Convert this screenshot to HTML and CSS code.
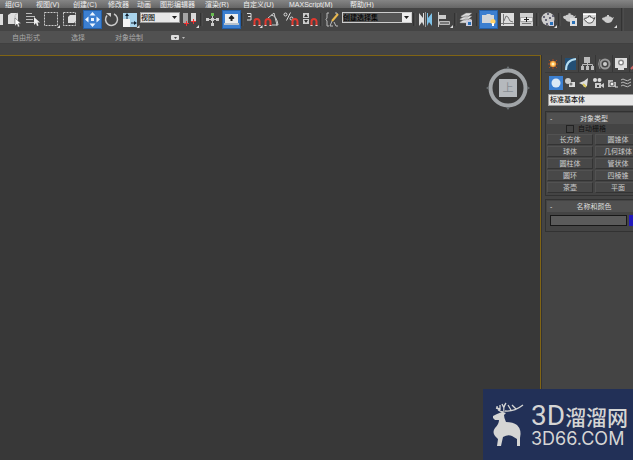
FILE: index.html
```html
<!DOCTYPE html>
<html lang="zh-CN">
<head>
<meta charset="utf-8">
<title>MAXScript</title>
<link rel="stylesheet" href="styles.css">
</head>
<body>
<svg class="defs" aria-hidden="true">
  <defs>
    <symbol id="magnet" viewBox="0 0 8 8"><path d="M1.500 8V3.500a2.500 2.500 0 0 1 5 0V8" fill="none" stroke="#e0392f" stroke-width="2"/><path d="M.5 7.500h2M5.500 7.500h2" stroke="#ddd"/></symbol>
    <symbol id="teapot" viewBox="0 0 14 10"><path d="M3 4c0-1 2-1.500 3-1.700V1h2v1.300c1 .2 3 .7 3 1.700l2-1-1.500 3C11 8 9 9 7 9S3.500 8 3 6.500C1 6.500 0 3 3 3.500z"/></symbol>
  </defs>
</svg>
<nav class="menu">
  <a href="#">组(G)</a><a href="#">视图(V)</a><a href="#">创建(C)</a><a href="#">修改器</a><a href="#">动画</a><a href="#">图形编辑器</a><a href="#">渲染(R)</a><a href="#">自定义(U)</a><a href="#">MAXScript(M)</a><a href="#">帮助(H)</a>
</nav>
<div class="toolbar">
  <span class="combo-end"></span>
  <button aria-label="选择对象"><svg viewBox="0 0 19 19"><path d="M4 5l3-2h7v9l-2 2H4z" fill="#ddd"/><path d="M11 5.500v8M11 5l3-2" fill="none" stroke="#bbb"/><path d="M11 8v8l2-2 1 3 1.500-.5-1-3H17z" fill="#fff" stroke="#555" stroke-width=".5"/></svg></button>
  <button aria-label="按名称选择"><svg viewBox="0 0 19 19"><path d="M3 3.500h6M3 6.500h9M3 9.500h7M3 12.500h8" stroke="#bbb"/><path d="M11 7v8l2-2 1 3 1.500-.5-1-3H17z" fill="#eee"/></svg></button>
  <button aria-label="矩形选择区域"><svg viewBox="0 0 19 19"><path d="M2.500 2.500h13v13h-13z" fill="none" stroke="#ccc" stroke-dasharray="2 1"/><path d="M18 15v3h-3z" fill="#ddd"/></svg></button>
  <button aria-label="窗口/交叉"><svg viewBox="0 0 19 19"><path d="M2.500 2.500h12v13h-12z" fill="none" stroke="#ccc" stroke-dasharray="2 1"/><path d="M7 7l2-2h6v6l-2 2H7z" fill="#ddd"/></svg></button>
  <i class="sep"></i>
  <button class="on" aria-label="移动"><svg viewBox="0 0 19 19"><path d="M9.500 2l3 3.500h-6zM9.500 17l3-3.500h-6zM2 9.500l3.500-3v6zM17 9.500l-3.500-3v6zM8 8h3v3H8z" fill="#eef6ff"/></svg></button>
  <button aria-label="旋转"><svg viewBox="0 0 19 19"><path d="M5 5.500a6 6 0 1 0 7-1.500" fill="none" stroke="#ccc" stroke-width="1.500"/><path d="M4 3h5v4z" fill="#ccc"/></svg></button>
  <button aria-label="缩放"><svg viewBox="0 0 19 19"><path d="M2 3h14v14H2z" fill="#a9d4ec"/><path d="M2 9h7v8H2z" fill="#f4f4f4"/><path d="M6 9V6M10 13h4" stroke="#123"/><path d="M6 3l2 3H4zM16 13l-3-2v4z" fill="#123"/><path d="M18.500 15v3h-3z" fill="#ddd"/></svg></button>
  <select class="view-select" aria-label="参考坐标系"><option>视图</option></select>
  <button aria-label="使用轴点中心"><svg viewBox="0 0 19 19"><path d="M2 3h5v10H2z" fill="#a4a4a4"/><path d="M10 3h5v9h-5z" fill="#d8d8d8"/><path d="M3 13.500h5M5.500 11v5M10 11.500h5M12.500 9v5" stroke="#e33"/><path d="M18 15v3h-3z" fill="#ddd"/></svg></button>
  <i class="sep"></i>
  <button aria-label="选择并操纵"><svg viewBox="0 0 19 19"><path d="M9.500 5v9M5 9.500h9" stroke="#ccc"/><path d="M8 3h3v3H8z" fill="#69bd52"/><path d="M8 13h3v3H8zM3 8h3v3H3zM13 8h3v3h-3zM8 8h3v3H8z" fill="#ccc"/></svg></button>
  <button class="on" aria-label="键盘快捷键覆盖切换"><svg viewBox="0 0 19 19"><path d="M3 4h13v9H3z" fill="#eee"/><path d="M2 13h15v2H2z" fill="#b8c2cc"/><path d="M9.500 5l3 3-1 1h-1v2h-2V9h-1l-1-1z" fill="#222"/></svg></button>
  <i class="sep"></i>
  <button aria-label="捕捉开关"><svg viewBox="0 0 19 19"><path d="M3 3.500h4v6.500H3M4 6.500h3" fill="none" stroke="#ddd"/><use href="#magnet" x="9" y="8" width="8" height="8"/><path d="M18.500 15v3h-3z" fill="#ddd"/></svg></button>
  <button aria-label="角度捕捉切换"><svg viewBox="0 0 19 19"><path d="M5 8l6-5 3 12h-5M8 5q6 1 7 10h-2" fill="none" stroke="#ccc"/><use href="#magnet" x="1" y="8" width="8" height="8"/></svg></button>
  <button aria-label="百分比捕捉切换"><svg viewBox="0 0 19 19"><path d="M8.500 2.500l-4 8" stroke="#ddd"/><circle cx="3.500" cy="4.500" r="1.500" fill="none" stroke="#ddd"/><circle cx="9.500" cy="8.500" r="1.500" fill="none" stroke="#ddd"/><use href="#magnet" x="9" y="8" width="8" height="8"/></svg></button>
  <button aria-label="微调器捕捉切换"><svg viewBox="0 0 19 19"><path d="M2 3h6v5H2zM2 9h6v5H2z" fill="#ccc"/><path d="M5 4l2 3H3zM5 13l2-3H3z" fill="#333"/><use href="#magnet" x="9" y="8" width="8" height="8"/></svg></button>
  <i class="sep"></i>
  <button aria-label="编辑命名选择集"><svg viewBox="0 0 19 19"><path d="M6 3H4v5L3 9.500 4 11v5h2M12 3h2v2M9 11l-2 5h3M11 12l2 4h2" fill="none" stroke="#bbb"/><path d="M15 4l-6 7" stroke="#e9b84d" stroke-width="2"/></svg></button>
  <select class="set-select" aria-label="命名选择集"><option>创建选择集</option></select>
  <i class="sep"></i>
  <button aria-label="镜像"><svg viewBox="0 0 19 19"><path d="M3 3l4 5V3h1v13l-2-4-3 4z" fill="#ddd"/><path d="M16 3l-4 5V3h-1v13l2-4 3 4z" fill="#7fc2e8"/><path d="M9.500 2v15" stroke="#999"/></svg></button>
  <button aria-label="对齐"><svg viewBox="0 0 19 19"><path d="M3.500 2v15" stroke="#ccc"/><path d="M4 5h7v4H4z" fill="#ccc"/><path d="M4.500 11.500h10v3h-10z" fill="#777" stroke="#bbb"/><path d="M18 15v3h-3z" fill="#ddd"/></svg></button>
  <i class="sep"></i>
  <button aria-label="层管理器"><svg viewBox="0 0 19 19"><path d="M3 12l5-3h7l-4 4H3zM3 9l5-3h7l-4 4H3zM4 6l5-3h6l-4 4H4z" fill="#ddd" stroke="#777" stroke-width=".5"/><path d="M9 10h6v6H9z" fill="#ccd"/><path d="M11 12h3v3h-3z" fill="#2871b8"/></svg></button>
  <i class="sep"></i>
  <button class="on" aria-label="石墨建模工具"><svg viewBox="0 0 19 19"><path d="M3 5h4l1-1h3l1 1h3v8H3z" fill="#d3d6d9"/><circle cx="14" cy="11.500" r="2.500" fill="#ffd36a"/><path d="M14 13v3" stroke="#fff" stroke-width="2"/></svg></button>
  <button aria-label="曲线编辑器"><svg viewBox="0 0 19 19"><path d="M3 3h13v13H3z" fill="#ddd"/><path d="M5.500 4v11M3 13.500h13M6 11l2-5 2 1 2 4 3 1" fill="none" stroke="#777"/></svg></button>
  <button aria-label="图解视图"><svg viewBox="0 0 19 19"><path d="M3 3h13v4H3zM3 12h13v4H3z" fill="#d0d0d0"/><path d="M3 7h13v5H3z" fill="#aaa"/><path d="M4 8h11v3H4z" fill="#eee"/><path d="M9.500 7v5M7 9.500h5" stroke="#222"/><path d="M5 13.500h9" stroke="#777"/></svg></button>
  <i class="sep"></i>
  <button aria-label="材质编辑器"><svg viewBox="0 0 19 19"><circle cx="9" cy="9" r="6.500" fill="#ccc"/><path d="M4 6h2v2H4zM8 3h2v2H8zM6 9h2v2H6zM10 7h2v2h-2zM13 5h2v2h-2zM7 13h2v2H7z" fill="#667"/><path d="M10 11h5v5h-5z" fill="#ccd"/><path d="M11 12h3v3h-3z" fill="#2871b8"/><path d="M18 15v3h-3z" fill="#ddd"/></svg></button>
  <i class="sep"></i>
  <button aria-label="渲染设置"><svg viewBox="0 0 19 19"><use href="#teapot" x="1" y="2" width="15" height="11" fill="#ccc"/><path d="M9 8h7v8H9z" fill="#ddd"/><path d="M11 11h3v3h-3z" fill="#2871b8"/></svg></button>
  <button aria-label="渲染帧窗口"><svg viewBox="0 0 19 19"><path d="M3 3h13v13H3z" fill="#d8d8d8"/><path d="M3 4.500h13" stroke="#fff"/><use href="#teapot" x="3" y="5" width="13" height="9" fill="#eee" stroke="#444"/></svg></button>
  <button aria-label="渲染产品"><svg viewBox="0 0 19 19"><use href="#teapot" x="2" y="4" width="14" height="10" fill="#ccc"/><path d="M18 15v3h-3z" fill="#ddd"/></svg></button>
  <i class="sep last"></i>
</div>
<nav class="ribbon">
  <a href="#">自由形式</a><a href="#">选择</a><a href="#">对象绘制</a>
  <button aria-label="最小化"><svg viewBox="0 0 16 8"><rect x="1" y="1" width="8" height="5" rx="1" fill="#ddd"/><path d="M4 3h3L5.500 5z" fill="#444"/><path d="M12 3h3l-1.500 2z" fill="#bbb"/></svg></button>
</nav>
<div class="strip"></div>
<div class="work">
  <main class="viewport">
    <svg class="cube" viewBox="0 0 44 44" role="img" aria-label="上"><circle cx="22" cy="22" r="17.500" fill="none" stroke="#a1a5a8" stroke-width="4"/><path d="M20 3l2-3 2 3zM20 41l2 3 2-3zM3 20l-3 2 3 2zM41 20l3 2-3 2z" fill="#6b7073"/><path d="M13 13h18v18H13z" fill="#b5b9bd"/><text x="22" y="26" text-anchor="middle">上</text></svg>
  </main>
  <aside class="panel">
    <div class="tabs">
      <button class="active" aria-label="创建"><svg viewBox="0 0 16 16"><path d="M8 3v10M3 8h10M4 4l8 8M12 4l-8 8" stroke="#a94d22"/><circle cx="8" cy="8" r="3" fill="#ffad42"/><circle cx="8" cy="8" r="1.500" fill="#fff2bb"/></svg></button>
      <button aria-label="修改"><svg viewBox="0 0 16 16"><path d="M3 2h11v12H3z" fill="#234f75"/><path d="M4 14Q4 4 14 3" fill="none" stroke="#b6def2" stroke-width="2"/></svg></button>
      <button aria-label="层次"><svg viewBox="0 0 16 16"><path d="M5 1h6v6H5zM2 10h3v4H2zM7 10h3v4H7zM12 10h3v4h-3z" fill="#bbb"/><path d="M3.500 10V8.500h10V10M8.500 6v4" fill="none" stroke="#bbb"/></svg></button>
      <button aria-label="运动"><svg viewBox="0 0 16 16"><circle cx="9" cy="8" r="4.500" fill="none" stroke="#999" stroke-width="2"/><circle cx="9" cy="8" r="2" fill="#ccc"/><path d="M4 3Q1 8 4 13" fill="none" stroke="#888"/></svg></button>
      <button aria-label="显示"><svg viewBox="0 0 16 16"><path d="M2 2h12v10H2zM5 12h6v2H5z" fill="#ddd"/><circle cx="8" cy="6.500" r="3" fill="#888"/><circle cx="8" cy="6.500" r="1.500" fill="#fff"/></svg></button>
      <button aria-label="工具"><svg viewBox="0 0 16 16"><path d="M1 13L9 5" stroke="#c66" stroke-width="2"/></svg></button>
    </div>
    <div class="kinds">
      <button class="on" aria-label="几何体"><svg viewBox="0 0 14 14"><circle cx="7" cy="7" r="4.500" fill="#dce9f5"/></svg></button>
      <button aria-label="图形"><svg viewBox="0 0 14 14"><circle cx="5" cy="5" r="3" fill="#ccc"/><path d="M6 6h6v5H6z" fill="#ddd"/><circle cx="8" cy="8" r="1.500" fill="#777"/></svg></button>
      <button aria-label="灯光"><svg viewBox="0 0 14 14"><path d="M2 7l5-2 4-3-1 8-3 1-1-2z" fill="#ddd"/><path d="M6 8l3 3" stroke="#d8c85a" stroke-width="2"/></svg></button>
      <button aria-label="摄影机"><svg viewBox="0 0 14 14"><circle cx="4" cy="4" r="2" fill="#ddd"/><circle cx="8.500" cy="4" r="2" fill="#ddd"/><path d="M4 7h6v5H4zM10 9l3-2v5l-3-2z" fill="#ccc"/><path d="M6 9h2v2H6z" fill="#444"/></svg></button>
      <button aria-label="辅助对象"><svg viewBox="0 0 14 14"><path d="M3 4h5v2h3v5H3z" fill="#bbb"/><circle cx="7" cy="8" r="2" fill="#eee" stroke="#555"/><path d="M10 11h3" stroke="#ddd"/></svg></button>
      <button aria-label="空间扭曲"><svg viewBox="0 0 14 14"><path d="M2 4q2-2 4 0t6-1M2 7q2-2 4 0t6-1M2 10q2-2 4 0t6-1" fill="none" stroke="#bbb"/></svg></button>
    </div>
    <select class="type-select" aria-label="类别"><option>标准基本体</option></select>
    <section class="rollout">
      <h2><button aria-label="折叠">-</button>对象类型</h2>
      <label class="auto"><input type="checkbox">自动栅格</label>
      <div class="objects">
        <button>长方体</button><button>圆锥体</button>
        <button>球体</button><button>几何球体</button>
        <button>圆柱体</button><button>管状体</button>
        <button>圆环</button><button>四棱锥</button>
        <button>茶壶</button><button>平面</button>
      </div>
    </section>
    <section class="rollout">
      <h2><button aria-label="折叠">-</button>名称和颜色</h2>
      <div class="name-row"><input type="text" aria-label="名称"><button aria-label="颜色"></button></div>
    </section>
  </aside>
</div>
<div class="brand">
  <svg viewBox="0 0 34 46" aria-hidden="true"><path d="M11 10L6 12 2 14 2 16 4 18 8 18Q8 22 4 26Q1 30 4 34L7 37 6 44H10L12 35Q17 32 21 34L26 37 26 44H29L29 36Q31 28 26 23Q22 20 15 20Q13 16 13 13L15 11 12 10z" fill="#d5d5d4"/><path d="M12 10Q6 9 6 4M9 7L5 6M9 8L9 3M13 10Q12 5 15 1M13 6L11 2M14 9Q23 10 32 3M20 8L17 3M25 7L21 3" fill="none" stroke="#d5d5d4" stroke-width="1.300"/></svg>
  <div class="brand-text"><strong><b>3D</b>溜溜网</strong><span>3D66.COM</span></div>
</div>
</body>
</html>
```

FILE: styles.css
```css
* { box-sizing: border-box; }
body {
  margin: 0;
  height: 100vh;
  display: flex;
  flex-direction: column;
  overflow: hidden;
  background: #383838;
  color: #ccc;
  font: 7px/10px "Liberation Sans", "Noto Sans CJK SC", sans-serif;
}
button, select, input { font: inherit; color: inherit; margin: 0; padding: 0; border: 0; border-radius: 0; background: none; }
a { color: inherit; text-decoration: none; }
svg { display: block; }
.defs { position: absolute; width: 0; height: 0; }
.menu {
  flex: none;
  height: 8px;
  padding-left: 5px;
  display: grid;
  grid-template-columns: 31px 37px 35px 29px 23px 45px 38px 46px 61px auto;
  align-items: end;
  overflow: hidden;
  white-space: nowrap;
  color: #eee;
  background: linear-gradient(#858585, #666);
}
.menu a { line-height: 10px; margin-bottom: 3px; }
.toolbar {
  flex: none;
  height: 23px;
  display: flex;
  align-items: center;
  background: #444;
  overflow: hidden;
}
.toolbar > * { flex: none; }
.toolbar button { width: 19px; height: 19px; }
.toolbar button.on { background: #3c7fd0; border: 1px solid #2560a8; }
.toolbar button.on svg { margin: -1px; }
.toolbar svg { width: 19px; height: 19px; }
.combo-end { width: 3px; height: 11px; margin-right: 1px; background: #ddd; }
.sep { width: 3px; height: 13px; border-left: 1px solid #333; border-right: 1px solid #4c4c4c; }
.sep.last { height: 23px; margin-left: 3px; }
select { appearance: none; }
.view-select, .set-select, .type-select { height: 11px; border: 1px solid #999; line-height: 9px; font-size: 7px; font-weight: 500; background: #e6e6e6; color: #111; }
.view-select, .set-select {
  align-self: flex-start;
  margin-top: 4px;
  background-image: url("data:image/svg+xml,%3Csvg xmlns='http://www.w3.org/2000/svg' width='9' height='9'%3E%3Cpath d='M0 0h9v9H0z' fill='%23eee'/%3E%3Cpath d='M2 3h5L4.500 6z' fill='%23222'/%3E%3C/svg%3E");
  background-position: right center;
  background-repeat: no-repeat;
}
.view-select { width: 40px; margin-right: 1px; }
.set-select { width: 70px; margin-right: 1px; background-color: #555; border-color: #ccc; color: #000; }
.ribbon {
  flex: none;
  height: 13px;
  padding-left: 12px;
  display: grid;
  grid-template-columns: 59px 44px 55px auto;
  align-items: end;
  background: #515151;
  border-bottom: 1px solid #404040;
  color: #aaa;
}
.ribbon button { width: 16px; height: 10px; }
.ribbon svg { height: 8px; }
.strip { flex: none; height: 11px; background: #434343; }
.work { flex: 1; min-height: 0; display: flex; }
.viewport {
  flex: 1;
  display: flex;
  justify-content: flex-end;
  align-items: flex-start;
  padding: 10px 10px 0 0;
  border-top: 1px solid #806414;
  border-right: 1px solid #806414;
  background: #383838;
}
.cube { width: 44px; height: 44px; }
.cube text { font-size: 11px; fill: #888e94; }
.panel {
  flex: none;
  width: 92px;
  padding-left: 3px;
  overflow: hidden;
  background: #444;
  border-left: 1px solid #333;
}
.tabs { display: flex; height: 18px; width: 110px; border-bottom: 1px solid #3a3a3a; }
.tabs button { width: 17px; height: 17px; border-right: 1px solid #363636; }
.tabs svg { width: 16px; height: 16px; }
.kinds { display: flex; width: 100px; padding: 3px 0 0 4px; }
.kinds button { width: 14px; height: 14px; }
.kinds button.on { background: #3c7fd0; }
.kinds svg { width: 14px; height: 14px; }
.type-select { display: block; width: 100px; height: 12px; margin: 4px 0 5px 3px; padding-left: 1px; line-height: 10px; }
.rollout { width: 98px; margin-bottom: 3px; padding: 1px 1px 2px; border: 1px solid #323232; }
.rollout h2 {
  display: flex;
  height: 11px;
  margin: 0;
  justify-content: center;
  align-items: center;
  position: relative;
  font-size: 7px;
  line-height: 11px;
  font-weight: normal;
  background: #505050;
  color: #ddd;
}
.rollout h2 button { position: absolute; left: 3px; top: 0; }
.auto { display: flex; align-items: center; height: 10px; padding-left: 19px; gap: 4px; color: #111; }
.auto input { appearance: none; width: 8px; height: 8px; border: 1px solid #222; }
.objects { display: grid; grid-template-columns: 1fr 1fr; gap: 1px 2px; }
.objects button { height: 11px; background: #484848; border: 1px solid #525252; border-right-color: #333; border-bottom-color: #333; line-height: 9px; }
.name-row { display: flex; gap: 2px; padding: 3px 0 3px 3px; }
.name-row input { width: 77px; height: 11px; background: #5b5b5b; border: 1px solid #181818; }
.name-row button { width: 11px; height: 11px; background: #2319bc; }
.brand {
  position: fixed;
  right: 0;
  bottom: 0;
  width: 150px;
  height: 71px;
  padding: 13px 8px 0 8px;
  display: flex;
  gap: 6px;
  background: #223057;
  color: #d5d5d4;
}
.brand svg { flex: none; width: 34px; height: 46px; }
.brand-text { display: flex; flex-direction: column; white-space: nowrap; }
.brand strong { display: flex; align-items: center; height: 28px; font: 500 21px/24px "Noto Sans CJK SC", sans-serif; }
.brand b { font: 400 28px/28px Roboto, sans-serif; }
.brand span { font: 18px/18px Inter, sans-serif; }
```
